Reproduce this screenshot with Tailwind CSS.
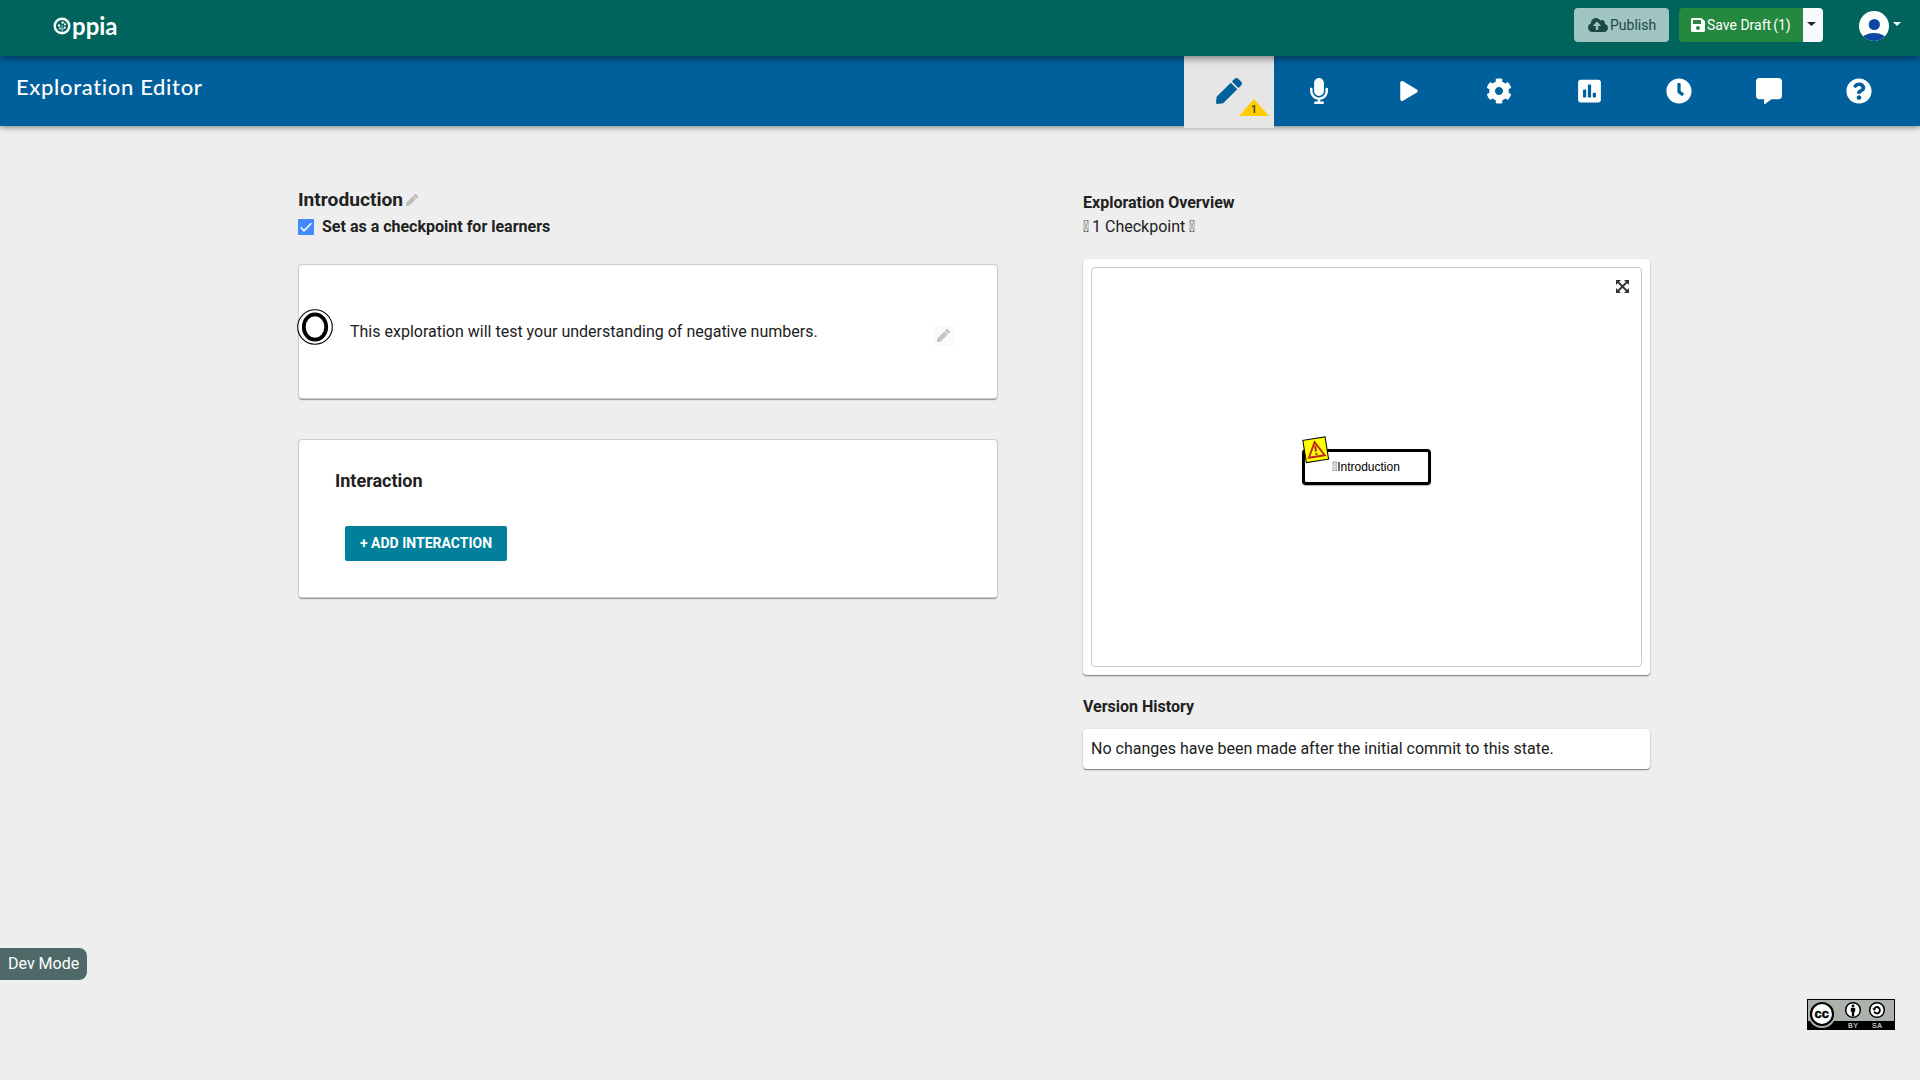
<!DOCTYPE html>
<html lang="en">
<head>
<meta charset="utf-8">
<title>Exploration Editor - Oppia</title>
<script src="https://cdn.jsdelivr.net/npm/@tailwindcss/browser@4"></script>
</head>
<body class="relative flex h-screen flex-col overflow-hidden bg-[#eeeeee] font-['Roboto',sans-serif] text-base text-[#212121]">
  <header class="relative z-20 flex h-14 shrink-0 items-start justify-between bg-[#00645c] shadow-[0_2px_8px_rgba(0,0,0,0.5)]">
    <div class="flex h-14 items-center pl-[53px] text-white">
      <svg class="mb-[5px] h-[18px] w-[18px]" viewBox="0 0 18 18"><circle cx="9" cy="9" r="7.3" fill="none" stroke="#fff" stroke-width="2.4"/><g fill="#fff"><circle cx="9.6" cy="5.6" r="1.2"/><circle cx="6" cy="8.5" r="1.2"/><circle cx="12" cy="7.3" r="1.1"/><circle cx="11.8" cy="10.6" r="1.1"/><circle cx="7" cy="11.5" r=".9"/></g><path d="M9 15V8M9 13l3-2.500" stroke="#fff" stroke-width=".7" fill="none"/></svg>
      <span class="-mt-1 ml-px font-['Lato',sans-serif] text-2xl leading-none font-bold">ppia</span>
    </div>
    <div class="flex items-start pt-2 pr-[18px]">
      <button class="flex h-[34px] w-[95px] items-center rounded bg-[#a0c4c0] pl-3.5 text-sm text-[#1b4a46]">
        <svg class="mr-[2px] h-4 w-5" viewBox="0 0 640 512" fill="currentColor"><path d="M537.6 226.6c4.100-10.700 6.400-22.400 6.400-34.600 0-53-43-96-96-96-19.700 0-38.100 6-53.300 16.200C367 64.200 315.300 32 256 32c-88.400 0-160 71.600-160 160 0 2.700.1 5.400.2 8.100C40.200 219.800 0 273.200 0 336c0 79.500 64.500 144 144 144h368c70.700 0 128-57.300 128-128 0-61.900-44-113.600-102.400-125.400zM393.400 288H328v112c0 8.800-7.200 16-16 16h-48c-8.800 0-16-7.200-16-16V288h-65.400c-14.300 0-21.400-17.200-11.300-27.300l105.400-105.400c6.200-6.200 16.400-6.200 22.600 0l105.400 105.400c10.100 10.100 2.900 27.300-11.300 27.300z"/></svg>
        <span>Publish</span>
      </button>
      <button class="ml-2.5 flex h-[34px] w-[124px] items-center rounded-l bg-[#24883e] pl-3 text-sm whitespace-nowrap text-white">
        <svg class="mr-[2px] h-4 w-3.5" viewBox="0 0 448 512" fill="currentColor"><path d="M433.941 129.941l-83.882-83.882A48 48 0 0 0 316.118 32H48C21.490 32 0 53.490 0 80v352c0 26.510 21.490 48 48 48h352c26.510 0 48-21.490 48-48V163.882a48 48 0 0 0-14.059-33.941zM224 416c-35.346 0-64-28.654-64-64 0-35.346 28.654-64 64-64s64 28.654 64 64c0 35.346-28.654 64-64 64zm96-304.520V212c0 6.627-5.373 12-12 12H76c-6.627 0-12-5.373-12-12V108c0-6.627 5.373-12 12-12h228.520c3.183 0 6.235 1.264 8.485 3.515l3.480 3.480A11.996 11.996 0 0 1 320 111.480z"/></svg>
        <span>Save Draft</span><span class="ml-[2px]">(1)</span>
      </button>
      <button class="flex h-[34px] w-5 items-center rounded-r bg-[#f8f9fa] pb-0.5 pl-1">
        <svg class="h-1 w-[9px]" viewBox="0 0 9 4"><path d="M0 0h9L4.500 4z" fill="#212529"/></svg>
      </button>
      <svg class="mt-[3px] ml-9 h-[30px] w-[30px]" viewBox="0 0 30 30"><defs><clipPath id="av"><circle cx="15" cy="15" r="15"/></clipPath></defs><circle cx="15" cy="15" r="15" fill="#fff"/><circle cx="15.300" cy="13.500" r="5.600" fill="#0d47a1"/><ellipse cx="15" cy="30" rx="13" ry="8" fill="#0d47a1" clip-path="url(#av)"/></svg>
      <svg class="mt-3.5 ml-1 h-1 w-[9px]" viewBox="0 0 9 4"><path d="M0 0h8L4 4z" fill="#fff"/></svg>
    </div>
  </header>

  <nav class="relative z-10 flex h-[70px] shrink-0 justify-between bg-[#00609c] pr-4 shadow-[0_1px_6px_rgba(0,0,0,0.5)]">
    <h1 class="pt-[17px] pl-4 font-['Lato',sans-serif] text-[22px] leading-7 font-medium tracking-[0.65px] text-white">Exploration Editor</h1>
    <div class="flex text-white">
      <a class="relative flex h-[72px] w-[90px] items-center justify-center bg-[#e6e6e6] pb-0.5 text-[#00609c]">
        <svg class="h-[26px] w-[26px]" viewBox="0 0 512 512" fill="currentColor"><path d="M290.740 93.240l128.020 128.020-277.990 277.990-114.140 12.600C11.350 513.540-1.560 500.620.14 485.340l12.700-114.220 277.900-277.880zm207.200-19.060l-60.110-60.110c-18.750-18.750-49.160-18.750-67.910 0l-56.550 56.550 128.020 128.020 56.550-56.550c18.750-18.760 18.750-49.160 0-67.910z"/></svg>
        <span class="absolute top-[43px] left-[55px] flex h-[17px] w-[30px] justify-center bg-[#ffcc00] pt-[6px] text-[11px] leading-[10px] font-medium text-[#333333] [clip-path:polygon(50%_0,100%_100%,0_100%)]">1</span>
      </a>
      <a class="flex w-[90px] items-center justify-center"><svg class="h-[26px] w-[18px]" viewBox="0 0 352 512" fill="currentColor"><path d="M176 352c53.020 0 96-42.980 96-96V96c0-53.020-42.980-96-96-96S80 42.980 80 96v160c0 53.020 42.980 96 96 96zm160-160h-16c-8.840 0-16 7.160-16 16v48c0 74.800-64.490 134.820-140.790 127.380C96.710 376.890 48 317.110 48 250.300V208c0-8.840-7.160-16-16-16H16c-8.840 0-16 7.160-16 16v40.160c0 89.640 63.970 169.550 152 181.690V464H96c-8.840 0-16 7.160-16 16v16c0 8.840 7.160 16 16 16h160c8.840 0 16-7.160 16-16v-16c0-8.840-7.160-16-16-16h-56v-33.770C285.710 418.470 352 344.900 352 256v-48c0-8.840-7.160-16-16-16z"/></svg></a>
      <a class="flex w-[90px] items-center justify-center pb-px"><svg class="h-5 w-[18px]" viewBox="0 0 448 512" fill="currentColor"><path d="M424.400 214.700L72.400 6.600C43.800-10.300 0 6.100 0 47.900V464c0 37.500 40.700 60.100 72.400 41.300l352-208c31.400-18.500 31.500-64.100 0-82.600z"/></svg></a>
      <a class="flex w-[90px] items-center justify-center"><svg class="h-[26px] w-[26px]" viewBox="0 0 512 512" fill="currentColor"><path d="M487.400 315.700l-42.600-24.600c4.300-23.200 4.300-47 0-70.200l42.600-24.600c4.900-2.800 7.100-8.600 5.500-14-11.100-35.600-30-67.800-54.700-94.600-3.800-4.100-10-5.100-14.800-2.300L380.800 110c-17.900-15.400-38.500-27.300-60.800-35.100V25.800c0-5.600-3.900-10.500-9.400-11.700-36.700-8.200-74.300-7.800-109.200 0-5.500 1.200-9.400 6.100-9.400 11.700V75c-22.200 7.900-42.800 19.800-60.800 35.100L88.700 85.500c-4.900-2.800-11-1.900-14.800 2.300-24.700 26.700-43.600 58.900-54.700 94.600-1.700 5.400.6 11.200 5.500 14L67.300 221c-4.300 23.200-4.300 47 0 70.200l-42.600 24.600c-4.900 2.800-7.100 8.600-5.500 14 11.100 35.600 30 67.800 54.700 94.600 3.800 4.100 10 5.100 14.800 2.300l42.600-24.600c17.900 15.400 38.500 27.300 60.800 35.100v49.200c0 5.600 3.900 10.500 9.400 11.700 36.700 8.200 74.300 7.800 109.200 0 5.500-1.200 9.400-6.100 9.400-11.700v-49.200c22.200-7.900 42.800-19.800 60.800-35.100l42.600 24.600c4.900 2.800 11 1.900 14.800-2.300 24.700-26.700 43.600-58.900 54.700-94.600 1.500-5.500-.7-11.300-5.600-14.100zM256 336c-44.100 0-80-35.900-80-80s35.900-80 80-80 80 35.900 80 80-35.900 80-80 80z"/></svg></a>
      <a class="flex w-[90px] items-center justify-center"><svg class="h-[26px] w-[23px]" viewBox="0 0 448 512" fill="currentColor"><path d="M400 32H48C21.500 32 0 53.500 0 80v352c0 26.500 21.500 48 48 48h352c26.500 0 48-21.500 48-48V80c0-26.500-21.500-48-48-48zM160 368c0 8.840-7.160 16-16 16h-32c-8.840 0-16-7.160-16-16V240c0-8.840 7.160-16 16-16h32c8.840 0 16 7.160 16 16v128zm96 0c0 8.840-7.160 16-16 16h-32c-8.840 0-16-7.160-16-16V144c0-8.840 7.160-16 16-16h32c8.840 0 16 7.160 16 16v224zm96 0c0 8.840-7.160 16-16 16h-32c-8.840 0-16-7.160-16-16v-64c0-8.840 7.160-16 16-16h32c8.840 0 16 7.160 16 16v64z"/></svg></a>
      <a class="flex w-[90px] items-center justify-center"><svg class="h-[26px] w-[26px]" viewBox="0 0 512 512" fill="currentColor"><path d="M256,8C119,8,8,119,8,256S119,504,256,504,504,393,504,256,393,8,256,8Zm92.490,313h0l-20,25a16,16,0,0,1-22.490,2.500h0l-67-49.720a40,40,0,0,1-15-31.230V112a16,16,0,0,1,16-16h32a16,16,0,0,1,16,16V256l58,42.500A16,16,0,0,1,348.490,321Z"/></svg></a>
      <a class="flex w-[90px] items-center justify-center"><svg class="h-[26px] w-[26px]" viewBox="0 0 512 512" fill="currentColor"><path d="M448 0H64C28.700 0 0 28.700 0 64v288c0 35.300 28.700 64 64 64h96v84c0 9.800 11.200 15.500 19.100 9.700L304 416h144c35.300 0 64-28.700 64-64V64c0-35.300-28.700-64-64-64z"/></svg></a>
      <a class="flex w-[90px] items-center justify-center"><svg class="h-[26px] w-[26px]" viewBox="0 0 512 512" fill="currentColor"><path d="M504 256c0 136.997-111.043 248-248 248S8 392.997 8 256C8 119.083 119.043 8 256 8s248 111.083 248 248zM262.655 90c-54.497 0-89.255 22.957-116.549 63.758-3.536 5.286-2.353 12.415 2.715 16.258l34.699 26.310c5.205 3.947 12.621 3.008 16.665-2.122 17.864-22.658 30.113-35.797 57.303-35.797 20.429 0 45.698 13.148 45.698 32.958 0 14.976-12.363 22.667-32.534 33.976C247.128 238.528 216 254.941 216 296v4c0 6.627 5.373 12 12 12h56c6.627 0 12-5.373 12-12v-1.333c0-28.462 83.186-29.647 83.186-106.667 0-58.002-60.165-102-116.531-102zM256 338c-25.365 0-46 20.635-46 46 0 25.364 20.635 46 46 46s46-20.636 46-46c0-25.365-20.635-46-46-46z"/></svg></a>
    </div>
  </nav>

  <main class="flex grow items-start pl-[298px]">
    <section class="w-[700px] pt-[62px]">
      <h2 class="flex h-6 items-center text-[19.2px] leading-6 font-bold">
        <span>Introduction</span>
        <svg class="ml-[3px] h-3 w-3" viewBox="0 0 512 512" fill="#bdbdbd"><path d="M290.740 93.240l128.020 128.020-277.990 277.990-114.140 12.600C11.350 513.540-1.560 500.620.14 485.340l12.700-114.220 277.900-277.880zm207.200-19.060l-60.110-60.110c-18.750-18.750-49.160-18.750-67.910 0l-56.550 56.550 128.020 128.020 56.550-56.550c18.750-18.760 18.750-49.160 0-67.910z"/></svg>
      </h2>
      <label class="mt-[3px] flex h-6 items-center font-bold">
        <svg class="mr-2 h-4 w-4" viewBox="0 0 16 16"><rect width="16" height="16" rx="1" fill="#448aff"/><path d="M2.700 8.300l3.300 3.500L13.400 4.300" fill="none" stroke="#fff" stroke-width="1.500"/></svg>
        <span>Set as a checkpoint for learners</span>
      </label>
      <div class="mt-[26px] ml-px flex h-[133px] w-[698px] items-start rounded-[3px] bg-white shadow-[0_0_0_1px_#cccccc,0_2px_1px_rgba(0,0,0,0.35),0_1px_3px_rgba(0,0,0,0.12)]">
        <svg class="mt-11 -ml-[2px] h-9 w-9 shrink-0" viewBox="0 0 36 36"><circle cx="18" cy="18" r="17.300" fill="#fff" stroke="#000" stroke-width="1.100"/><ellipse cx="18" cy="18" rx="11.200" ry="12.600" fill="none" stroke="#000" stroke-width="3.800"/></svg>
        <p class="mt-[55px] ml-[17px] grow leading-6">This exploration will test your understanding of negative numbers.</p>
        <span class="mt-[61px] mr-11 flex h-5 w-5 items-center justify-center bg-[#fafafa] pb-0.5"><svg class="h-[13px] w-[13px]" viewBox="0 0 512 512" fill="#c4c4c4"><path d="M290.740 93.240l128.020 128.020-277.990 277.990-114.140 12.600C11.350 513.540-1.560 500.620.14 485.340l12.700-114.220 277.900-277.880zm207.200-19.060l-60.110-60.110c-18.750-18.750-49.160-18.750-67.910 0l-56.550 56.550 128.020 128.020 56.550-56.550c18.750-18.760 18.750-49.160 0-67.910z"/></svg></span>
      </div>
      <div class="mt-[42px] ml-px flex h-[157px] w-[698px] flex-col items-start rounded-[3px] bg-white pt-[29px] pl-9 shadow-[0_0_0_1px_#cccccc,0_2px_1px_rgba(0,0,0,0.35),0_1px_3px_rgba(0,0,0,0.12)]">
        <h3 class="text-lg leading-6 font-bold">Interaction</h3>
        <button class="mt-[33px] ml-[10px] h-[35px] w-[162px] rounded-[2px] bg-[#00809a] pb-0.5 text-sm font-bold whitespace-nowrap text-white">+ ADD INTERACTION</button>
      </div>
    </section>

    <aside class="ml-[85px] w-[567px] pt-[65px]">
      <h3 class="leading-6 font-bold">Exploration Overview</h3>
      <p class="flex gap-1 leading-6"><span class="w-[6px] text-black/80"><span class="inline-block origin-left scale-x-[0.85]">&#xf024;</span></span><span class="-ml-px">1 Checkpoint</span><span class="w-[6px] text-black/80"><span class="inline-block origin-left scale-x-[0.85]">&#xf059;</span></span></p>
      <div class="mt-5 h-[416px] rounded bg-white p-2 shadow-[0_1px_1px_rgba(0,0,0,0.4),0_1px_3px_rgba(0,0,0,0.15)]">
        <div class="relative h-[400px] w-[551px] rounded border border-[#c9c9c9]">
          <svg class="absolute top-[12px] right-3 h-[13px] w-[13px]" viewBox="0 0 13 13"><path d="M1.500 1.500l10 10M11.500 1.500l-10 10" stroke="#333" stroke-width="1.800"/><path d="M0 0h5L0 5zM13 0v5L8 0zM0 13V8l5 5zM13 13H8l5-5z" fill="#333"/></svg>
          <!-- Graph node for the initial state -->
          <div class="absolute top-[181px] left-[210px] flex h-9 w-[129px] items-center justify-center rounded border-[3px] border-black bg-white pr-px font-['Liberation_Sans',sans-serif] text-xs text-black shadow-[0_1px_1px_rgba(0,0,0,0.3)]"><span class="w-[5px] font-['Roboto',sans-serif] text-[13px] text-black/80"><span class="inline-block origin-left scale-x-90">&#xf024;</span></span>Introduction</div>
          <svg class="absolute top-[168px] left-[210px] h-[28px] w-[28px]" viewBox="0 0 28 28"><g transform="rotate(-9 14 14)"><rect x="2.500" y="2.500" width="22.500" height="22.500" fill="#ff0" stroke="#000" stroke-width="1"/><path d="M13.800 6L21.800 20.500H5.800z" fill="none" stroke="#c0271a" stroke-width="1.900"/><path d="M13.800 9.500v6M13.800 17v2" stroke="#c0271a" stroke-width="2"/></g></svg>
        </div>
      </div>
      <h3 class="mt-5 leading-6 font-bold">Version History</h3>
      <p class="mt-[10px] h-10 rounded bg-white px-2 leading-10 shadow-[0_1px_1px_rgba(0,0,0,0.4),0_1px_3px_rgba(0,0,0,0.15)]">No changes have been made after the initial commit to this state.</p>
    </aside>
  </main>

  <div class="absolute top-[948px] left-0 flex h-8 w-[87px] items-center rounded-r-lg bg-[#4d6a69] pl-2 text-white">Dev Mode</div>
  <svg class="absolute top-[999px] left-[1807px] h-[31px] w-[88px]" viewBox="0 0 88 31">
    <rect x=".5" y=".5" width="87" height="30" fill="#aab2ab" stroke="#000"/><rect y="22" width="88" height="9"/>
    <circle cx="15" cy="15" r="14" fill="#aab2ab"/><circle cx="15" cy="15" r="11" fill="#fff" stroke="#000" stroke-width="2.200"/>
    <text x="14.800" y="19.300" text-anchor="middle" font-family="Liberation Sans, sans-serif" font-weight="700" font-size="13" stroke="#000" stroke-width=".5">cc</text>
    <circle cx="46" cy="11" r="7.300" fill="#fff" stroke="#000" stroke-width="1.500"/><circle cx="46" cy="6.800" r="1.400"/><path d="M43.800 8.800h4.400v4h-1V17h-2.400v-4.200h-1z"/>
    <circle cx="70" cy="11" r="7.300" fill="#fff" stroke="#000" stroke-width="1.500"/><path d="M67.200 9.800a3 3.200 0 1 1 0 2.800" fill="none" stroke="#000" stroke-width="1.800"/><path d="M65.200 9.500h4l-2 2.500z"/>
    <g fill="#fff" font-family="Liberation Sans, sans-serif" font-size="7"><text x="41" y="29" textLength="10">BY</text><text x="65" y="29" textLength="10">SA</text></g>
  </svg>
</body>
</html>
